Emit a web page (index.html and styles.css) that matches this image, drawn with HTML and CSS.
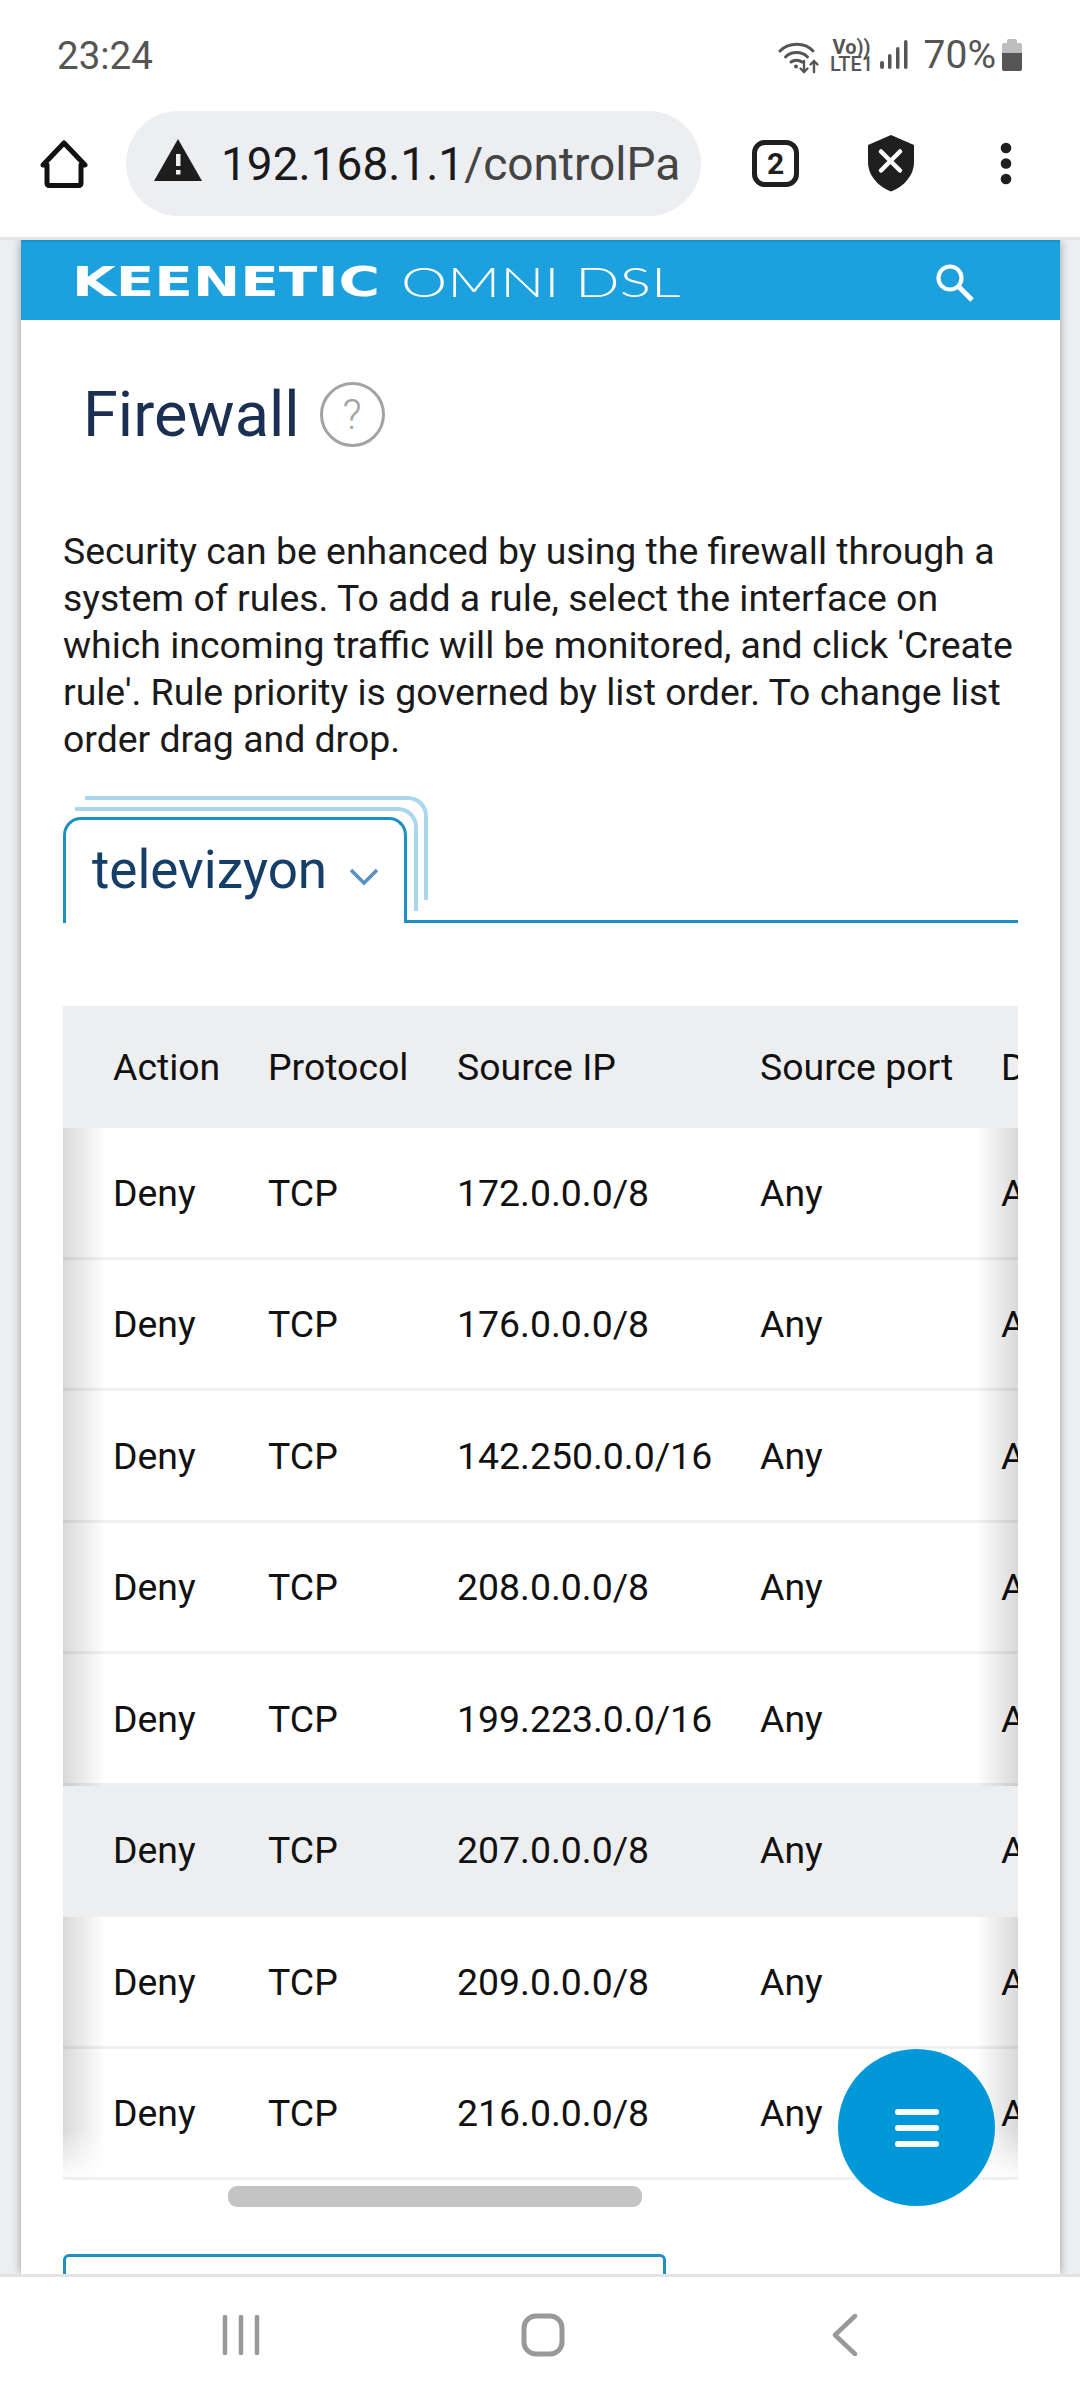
FILE: index.html
```html
<!DOCTYPE html>
<html lang="en">
<head>
<meta charset="utf-8">
<title>Firewall</title>
<link rel="stylesheet" href="styles.css">
</head>
<body>
<div class="phone">
  <div class="status">
    <span class="time">23:24</span>
    <div class="status-right">
      <svg class="i-wifi" width="42" height="34" viewBox="0 0 42 34" fill="none" stroke="#555" stroke-linecap="round">
        <path d="M2 10 C11 1 27 1 35 10" stroke-width="3"/>
        <path d="M7.500 16 C13 10 24 10 29.500 16" stroke-width="3"/>
        <path d="M13 21 C16 18.500 21 18.500 24 21" stroke-width="3"/>
        <circle cx="18" cy="25.500" r="2" fill="#555" stroke="none"/>
        <path d="M26 20 V31 M22.500 27.500 L26 31 L29.500 27.500 M36 31 V20 M32.500 23.500 L36 20 L39.500 23.500" stroke-width="2.400"/>
      </svg>
      <div class="volte"><span class="vo">Vo))</span><span class="lte">LTE1</span></div>
      <svg class="i-signal" width="28" height="30" viewBox="0 0 28 30" fill="#555">
        <rect x="0" y="21" width="4" height="8" rx="2"/>
        <rect x="8" y="14" width="3.500" height="15" rx="1.700"/>
        <rect x="16" y="7" width="3.500" height="22" rx="1.700"/>
        <rect x="24" y="0" width="3.500" height="29" rx="1.700"/>
      </svg>
      <span class="battery-text">70%</span>
      <svg class="i-battery" width="22" height="34" viewBox="0 0 22 34">
        <path d="M6 3 Q6 1 8 1 H14 Q16 1 16 3 V5 H19 Q21 5 21 7 V15 H1 V7 Q1 5 3 5 H6 Z" fill="#bdbdbd"/>
        <path d="M1 15 H21 V31 Q21 33 19 33 H3 Q1 33 1 31 Z" fill="#555"/>
      </svg>
    </div>
  </div>

  <div class="toolbar">
    <svg class="i-home" width="48" height="48" viewBox="0 0 48 48" fill="none" stroke="#111" stroke-width="5" stroke-linejoin="round">
      <path d="M24 3 L45 25 H41 V43 Q41 45.500 38.500 45.500 H9.500 Q7 45.500 7 43 V25 H3 Z"/>
    </svg>
    <div class="url">
      <svg class="i-warn" width="48" height="42" viewBox="0 0 48 42">
        <path d="M24 0 L48 42 H0 Z" fill="#1d1d1d"/>
        <rect x="22" y="15" width="4.500" height="12" fill="#eceef1"/>
        <rect x="22" y="31" width="4.500" height="4.500" fill="#eceef1"/>
      </svg>
      <span class="url-text"><span class="url-host">192.168.1.1</span>/controlPa</span>
    </div>
    <div class="tabs-count">2</div>
    <svg class="i-shield" width="48" height="57" viewBox="0 0 48 57">
      <path d="M24 0 L47 10 V27 C47 41 36 52 24 56.500 C12 52 1 41 1 27 V10 Z" fill="#1f1f1f"/>
      <path d="M14 16.500 L33 35.500 M33 16.500 L14 35.500" stroke="#fff" stroke-width="4.500" stroke-linecap="round"/>
    </svg>
    <svg class="i-dots" width="12" height="44" viewBox="0 0 12 44" fill="#1f1f1f">
      <circle cx="6" cy="6" r="5.300"/><circle cx="6" cy="21.500" r="5.300"/><circle cx="6" cy="37" r="5.300"/>
    </svg>
  </div>

  <div class="web">
    <div class="card">
      <header class="brand">
        <div class="logo"><span class="logo-a">KEENETIC</span><span class="logo-b">OMNI DSL</span></div>
        <svg class="i-search" width="40" height="40" viewBox="0 0 40 40" fill="none" stroke="#fff">
          <circle cx="15" cy="15" r="11.500" stroke-width="4.200"/>
          <path d="M23.500 23.500 L37 37" stroke-width="5"/>
        </svg>
      </header>
      <main class="content">
        <div class="title-row">
          <h1 class="title">Firewall</h1>
          <span class="help">?</span>
        </div>
        <p class="intro">Security can be enhanced by using the firewall through a system of rules. To add a rule, select the interface on which incoming traffic will be monitored, and click 'Create rule'. Rule priority is governed by list order. To change list order drag and drop.</p>

        <div class="tabs">
          <span class="tab-back tab-back-2"></span>
          <span class="tab-back tab-back-1"></span>
          <div class="tab">
            <span class="tab-label">televizyon</span>
            <svg class="i-chev" width="30" height="18" viewBox="0 0 30 18" fill="none" stroke="#5b90c6" stroke-width="3.500"><path d="M2 2 L15 15 L28 2"/></svg>
          </div>
          <div class="tab-rest"></div>
        </div>

        <div class="rules">
          <div class="row head"><span>Action</span><span>Protocol</span><span>Source IP</span><span>Source port</span><span>Destination IP</span></div>
          <div class="row"><span>Deny</span><span>TCP</span><span>172.0.0.0/8</span><span>Any</span><span>Any</span></div>
          <div class="row"><span>Deny</span><span>TCP</span><span>176.0.0.0/8</span><span>Any</span><span>Any</span></div>
          <div class="row"><span>Deny</span><span>TCP</span><span>142.250.0.0/16</span><span>Any</span><span>Any</span></div>
          <div class="row"><span>Deny</span><span>TCP</span><span>208.0.0.0/8</span><span>Any</span><span>Any</span></div>
          <div class="row"><span>Deny</span><span>TCP</span><span>199.223.0.0/16</span><span>Any</span><span>Any</span></div>
          <div class="row hover"><span>Deny</span><span>TCP</span><span>207.0.0.0/8</span><span>Any</span><span>Any</span></div>
          <div class="row"><span>Deny</span><span>TCP</span><span>209.0.0.0/8</span><span>Any</span><span>Any</span></div>
          <div class="row"><span>Deny</span><span>TCP</span><span>216.0.0.0/8</span><span>Any</span><span>Any</span></div>
          <div class="edge edge-left"></div>
          <div class="edge edge-right"></div>
        </div>
        <div class="scrollbar"><div class="thumb"></div></div>
        <div class="create"></div>
      </main>
    </div>
  </div>

  <button class="fab" type="button" aria-label="Menu">
    <span></span><span></span><span></span>
  </button>

  <nav class="nav">
    <div class="nav-item">
      <svg width="38" height="40" viewBox="0 0 38 40" fill="none" stroke="#999" stroke-width="4.500" stroke-linecap="round"><path d="M3 2 V38 M19 2 V38 M35 2 V38"/></svg>
    </div>
    <div class="nav-item">
      <svg width="44" height="44" viewBox="0 0 44 44" fill="none" stroke="#999" stroke-width="5"><rect x="3" y="3" width="38" height="38" rx="12"/></svg>
    </div>
    <div class="nav-item">
      <svg width="26" height="42" viewBox="0 0 26 42" fill="none" stroke="#999" stroke-width="4.500" stroke-linecap="round" stroke-linejoin="round"><path d="M23 2 L3 21 L23 40"/></svg>
    </div>
  </nav>
</div>
</body>
</html>
```
FILE: styles.css
```css
* { box-sizing: border-box; }
html, body { margin: 0; padding: 0; background: #fff; }
body { font-family: Roboto, "Liberation Sans", sans-serif; color: #111; }

.phone {
  position: relative;
  width: 1080px;
  height: 2400px;
  display: flex;
  flex-direction: column;
  overflow: hidden;
  background: #fff;
}

/* status bar */
.status {
  height: 111px;
  flex: none;
  display: flex;
  justify-content: space-between;
  align-items: flex-start;
  padding: 33px 57px 0 57px;
  color: #555;
}
.time { font-size: 38.500px; line-height: 46px; color: #555; }
.status-right { display: flex; align-items: center; height: 46px; margin-top: -1px; }
.i-wifi { margin-right: 13px; margin-top: 6px; }
.volte { display: flex; flex-direction: column; align-items: center; width: 38px; color: #555; line-height: 1; margin-right: 9px; }
.vo { font-size: 20px; font-weight: 700; line-height: 17px; }
.lte { font-size: 20px; font-weight: 500; line-height: 16px; }
.i-signal { margin-right: 16px; }
.battery-text { font-size: 39px; line-height: 46px; color: #555; margin-right: 5px; }

/* toolbar */
.toolbar {
  height: 129px;
  flex: none;
  display: flex;
  align-items: flex-start;
  border-bottom: 3px solid #e3e4e4;
  padding-left: 40px;
}
.i-home { margin-top: 29px; flex: none; }
.url {
  width: 575px;
  height: 105px;
  margin-left: 38px;
  border-radius: 53px;
  background: #eceef1;
  display: flex;
  align-items: center;
  padding-left: 28px;
  flex: none;
  overflow: hidden;
}
.i-warn { flex: none; margin-top: -7px; }
.url-text { font-size: 46px; line-height: 105px; color: #444; margin-left: 19px; white-space: nowrap; padding-top: 2px; }
.url-host { color: #1a1a1a; }
.tabs-count {
  width: 47px;
  height: 47px;
  margin: 29px 0 0 51px;
  border: 5px solid #1f1f1f;
  border-radius: 13px;
  font-size: 30px;
  font-weight: 700;
  line-height: 37px;
  text-align: center;
  color: #1f1f1f;
  flex: none;
}
.i-shield { margin: 24px 0 0 68px; flex: none; }
.i-dots { margin: 31px 0 0 85px; flex: none; }

/* web content */
.web {
  flex: 1;
  min-height: 0;
  background: #eceef0;
  padding: 0 20px 0 21px;
  overflow: hidden;
}
.card { background: #fff; height: 100%; box-shadow: 0 0 9px rgba(0, 0, 0, 0.35); }
.brand {
  height: 80px;
  background: #1ca0de;
  border-top: 2px solid #1591cc;
  display: flex;
  justify-content: space-between;
  align-items: center;
  padding: 0 85px 0 51px;
  color: #fff;
}
.logo { display: flex; align-items: center; white-space: nowrap; padding-top: 2px; }
.logo-a {
  font-family: "DejaVu Sans", sans-serif;
  font-weight: 700;
  font-size: 41px;
  line-height: 50px;
  width: 329px;
  display: inline-block;
  transform: scaleX(1.378);
  transform-origin: left center;
}
.logo-b {
  font-family: Lato, sans-serif;
  font-weight: 300;
  font-size: 41px;
  line-height: 50px;
  display: inline-block;
  transform: scaleX(1.424);
  transform-origin: left center;
}
.i-search { margin-top: 4px; }

.content { padding: 0 42px; }
.title-row { display: flex; align-items: center; height: 158px; padding: 31px 0 0 20px; }
.title { margin: 0; font-size: 63px; font-weight: 400; color: #1b2f52; line-height: 70px; }
.help {
  width: 65px;
  height: 65px;
  margin-left: 20px;
  border: 3px solid #a3a3a3;
  border-radius: 50%;
  color: #a3a3a3;
  font-size: 42px;
  line-height: 59px;
  text-align: center;
  font-weight: 300;
}
.intro { margin: 50px 0 0; font-size: 37.400px; line-height: 47px; color: #1a1a1a; }

.tabs { position: relative; display: flex; height: 127px; margin-top: 33px; }
.tab {
  width: 344px;
  margin-top: 21px;
  border: 3px solid #1d8fc2;
  border-bottom: 0;
  border-radius: 18px 18px 0 0;
  background: #fff;
  display: flex;
  align-items: center;
  padding: 0 0 4px 26px;
  position: relative;
  flex: none;
}
.tab-label { font-size: 53px; color: #153e68; line-height: 60px; }
.i-chev { margin-left: 22px; margin-top: 14px; }
.tab-rest { flex: 1; border-bottom: 3px solid #1d8fc2; }
.tab-back {
  position: absolute;
  border: solid #a9d8ee;
  border-width: 4px 4px 0 0;
  border-radius: 0 20px 0 0;
  background: transparent;
}
.tab-back-1 { left: 12px; width: 343px; top: 11px; height: 104px; }
.tab-back-2 { left: 22px; width: 343px; top: 0; height: 104px; }

.rules { position: relative; margin-top: 83px; overflow: hidden; }
.row {
  display: grid;
  grid-template-columns: 205px 189px 303px 241px 300px;
  width: 1238px;
  height: 131.500px;
  padding-top: 1px;
  border-bottom: 3px solid #eef0f1;
  align-items: center;
  font-size: 37.400px;
  color: #111;
  white-space: nowrap;
}
.row span:first-child { padding-left: 50px; }
.row.head { height: 122px; border-bottom: 0; padding-top: 0; background: #edeef0; }
.row.hover { position: relative; z-index: 1; background: #edeef0; border-bottom-color: #edeef0; }
.edge { position: absolute; top: 122px; bottom: 0; width: 42px; }
.edge-left {
  left: 0;
  background: linear-gradient(to right, rgba(0, 0, 0, 0.15), rgba(0, 0, 0, 0));
  -webkit-mask-image: linear-gradient(to bottom, #000 calc(100% - 50px), transparent);
}
.edge-right {
  right: 0;
  background: linear-gradient(to left, rgba(0, 0, 0, 0.15), rgba(0, 0, 0, 0));
  -webkit-mask-image: linear-gradient(to bottom, #000 calc(100% - 50px), transparent);
}
.scrollbar { height: 21px; margin-top: 6px; }
.thumb { width: 414px; height: 21px; margin-left: 165px; border-radius: 9px; background: #c4c4c4; }
.create {
  width: 603px;
  height: 110px;
  margin-top: 47px;
  border: 3px solid #1d8fc2;
  border-radius: 6px;
}

/* floating button */
.fab {
  position: absolute;
  right: 85px;
  bottom: 194px;
  width: 157px;
  height: 157px;
  border: 0;
  padding: 0;
  border-radius: 50%;
  background: #0098d9;
  display: flex;
  flex-direction: column;
  align-items: center;
  justify-content: center;
  gap: 10px;
}
.fab span { display: block; width: 44px; height: 6px; border-radius: 3px; background: #fff; }

/* nav */
.nav {
  height: 126px;
  flex: none;
  border-top: 3px solid #e2e4e4;
  display: grid;
  grid-template-columns: repeat(3, 302px);
  padding: 0 0 8px 90px;
  background: #fff;
}
.nav-item { display: flex; align-items: center; justify-content: center; }
```
